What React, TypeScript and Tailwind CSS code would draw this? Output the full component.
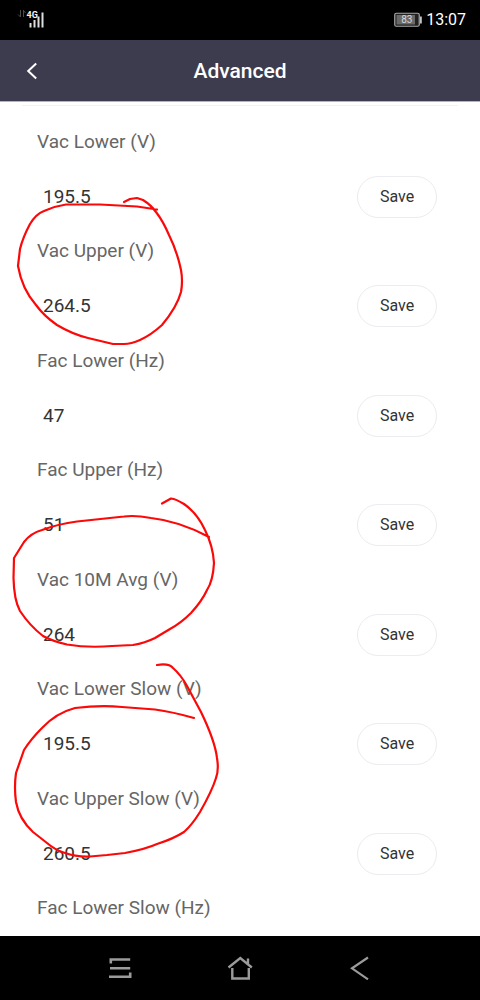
import React from "react";

type Field = { id: string; label: string; value?: string };

const fields: Field[] = [
  { id: "vac-lower", label: "Vac Lower (V)", value: "195.5" },
  { id: "vac-upper", label: "Vac Upper (V)", value: "264.5" },
  { id: "fac-lower", label: "Fac Lower (Hz)", value: "47" },
  { id: "fac-upper", label: "Fac Upper (Hz)", value: "51" },
  { id: "vac-10m", label: "Vac 10M Avg (V)", value: "264" },
  { id: "vac-lower-slow", label: "Vac Lower Slow (V)", value: "195.5" },
  { id: "vac-upper-slow", label: "Vac Upper Slow (V)", value: "260.5" },
  { id: "fac-lower-slow", label: "Fac Lower Slow (Hz)" },
];

function StatusBar() {
  return (
    <div className="flex h-10 items-center justify-between bg-black pl-4 pr-[14px] text-white">
      <svg width="30" height="24" viewBox="0 0 30 24" aria-label="4G signal" role="img">
        <g fill="none" stroke="#4a4a4a" strokeWidth="1">
          <path d="M4.5 2v7M4.5 9l-2.5-2.5M7.5 9V2M7.5 2.5l2 2.5" />
        </g>
        <text x="10.5" y="9.5" fill="#f5f5f5" fontSize="9" fontWeight="700" fontFamily="Roboto, sans-serif">
          4G
        </text>
        <g fill="#dedede">
          <rect x="13.5" y="15" width="2" height="4.5" />
          <rect x="17.5" y="12" width="2" height="7.5" />
          <rect x="21.5" y="8.5" width="2" height="11" />
          <rect x="25.5" y="4.5" width="2" height="15" />
        </g>
      </svg>
      <div className="flex items-center gap-1">
        <svg width="28" height="16" viewBox="0 0 28 16" aria-label="Battery 83%" role="img">
          <rect x="0.75" y="1.25" width="24.5" height="13" rx="1.5" fill="#222" stroke="#a8a8a8" strokeWidth="1.2" />
          <rect x="2.5" y="3" width="18.5" height="9.5" fill="#6a6a6a" />
          <rect x="26" y="4.5" width="1.8" height="7" fill="#c4c4c4" />
          <text x="12.8" y="11.3" textAnchor="middle" fill="#d8d8d8" fontSize="10" fontFamily="Roboto, sans-serif">
            83
          </text>
        </svg>
        <span className="text-base leading-5">13:07</span>
      </div>
    </div>
  );
}

function Header() {
  return (
    <header className="grid h-[62px] grid-cols-[64px_1fr_64px] items-center border-b border-[#b5b5bd] bg-[#3d3c4f] text-white">
      <button type="button" aria-label="Back" className="flex h-full items-center justify-center">
        <svg width="12" height="18" viewBox="0 0 12 18" fill="none" stroke="currentColor" strokeWidth="2">
          <path d="M10.2 1.5 2.2 9l8 7.5" />
        </svg>
      </button>
      <h1 className="text-center text-[21px] font-medium leading-6">Advanced</h1>
    </header>
  );
}

function FieldRow({ id, label, value }: Field) {
  return (
    <div className="flex flex-col gap-[22px]">
      <label htmlFor={value ? id : undefined} className="text-[19px] leading-6 text-[#666]">
        {label}
      </label>
      {value && (
        <div className="flex items-center justify-between">
          <input
            id={id}
            defaultValue={value}
            inputMode="decimal"
            className="min-w-0 flex-1 bg-transparent pl-[6px] text-[19px] leading-6 text-[#333] outline-none"
          />
          <button
            type="button"
            className="h-[42px] w-20 rounded-full border border-[#ececf0] bg-white text-base text-[#333]"
          >
            Save
          </button>
        </div>
      )}
    </div>
  );
}

function Markup() {
  return (
    <svg
      className="pointer-events-none absolute left-0 top-0"
      width="480"
      height="1000"
      viewBox="0 0 480 1000"
      fill="none"
      stroke="#fb0808"
      strokeWidth="2.2"
      strokeLinecap="round"
      strokeLinejoin="round"
      aria-hidden="true"
    >
      <path d="M124 202 L130 199 L137 198 L143 200 Q151 205 156 212 Q163 221 169 235 Q177 251 181 270 Q183 281 181 292 Q177 307 162 325 Q151 335 140 340 Q131 344 124 344 L113 344 L88 338 Q72 334 57 325 Q44 316 36 305 Q22 289 18 266 L20 249 Q23 237 30 224 Q36 214 44 211 Q55 206 66 204.5 L100 204.5 L137 206.5 L157 209.5" />
      <path d="M162 503.5 L171 498.5 Q176 499 184 504 Q197 513 205 530 Q213 546 214 563 Q213 581 207 590 Q202 601 191 613 Q181 623 170 629 L155 638 Q145 643 133 645 L112 646 Q88 648 67 644.5 Q52 641 43 636 Q30 626 20 611 Q14 600 13.5 578 L14 558 L24 542 Q31 533 42 530 Q58 524 77 521.5 L124 516.5 Q135 515 151 518 Q179 521 209 537" />
      <path d="M157 665 Q169 663 173 668 Q181 675 187 686 L201 712 Q215 741 217 758 Q219 770 216 778 Q212 791 200 812 Q192 825 184 832 Q173 839 157 844 Q146 849 125 853 L107 855 L90 856.5 Q76 857 65 853 Q55 850 47 843 L33 832 Q19 819 16 802 Q14 787 16 773 L24 750 Q31 739 42 728 Q56 713 75 708 Q100 705 122 707 L155 709.5 Q173 712 194 718" />
    </svg>
  );
}

function NavBar() {
  return (
    <nav className="grid h-16 grid-cols-[120px_120px_120px] justify-center bg-black text-[#9b9b9b]">
      <button type="button" aria-label="Recent apps" className="flex items-center justify-center">
        <svg width="24" height="24" viewBox="0 0 24 24" fill="none" stroke="currentColor" strokeWidth="2.6">
          <path d="M22.2 3.5H2.8V7.5M2 12.2H22.2M1 20.7H22.2V16.5" />
        </svg>
      </button>
      <button type="button" aria-label="Home" className="flex items-center justify-center">
        <svg width="26" height="26" viewBox="0 0 26 26" fill="none" stroke="currentColor" strokeWidth="2.4">
          <path d="M1.5 12.5 13.3 3l11.5 9.5M21 9V3.5M5.3 13v10.5h16.5V13" />
        </svg>
      </button>
      <button type="button" aria-label="Go back" className="flex items-center justify-center">
        <svg width="24" height="24" viewBox="0 0 24 24" fill="none" stroke="currentColor" strokeWidth="2.2">
          <path d="M20 1.5 4 12.3l16 11" />
        </svg>
      </button>
    </nav>
  );
}

export default function App() {
  return (
    <div className="relative flex min-h-screen flex-col bg-white font-['Roboto',sans-serif]">
      <StatusBar />
      <Header />
      <main className="flex flex-1 flex-col pt-[3px]">
        <div className="mx-[22px] border-t border-[#f3f3f3]" />
        <div className="flex flex-1 flex-col justify-between pb-4 pl-[37px] pr-[43px] pt-6">
          {fields.map((f) => (
            <FieldRow key={f.id} {...f} />
          ))}
        </div>
      </main>
      <NavBar />
      <Markup />
    </div>
  );
}
